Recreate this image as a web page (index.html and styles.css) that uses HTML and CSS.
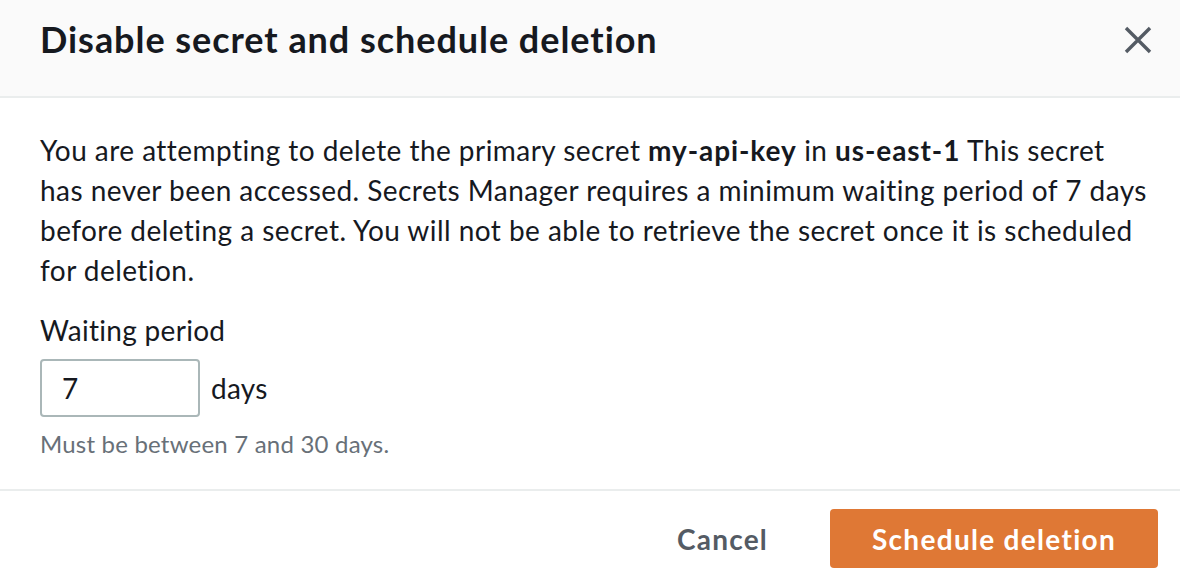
FILE: index.html
```html
<!DOCTYPE html>
<html lang="en">
<head>
<meta charset="utf-8">
<title>Disable secret and schedule deletion</title>
<link rel="stylesheet" href="styles.css">
</head>
<body>
<div class="modal">
  <div class="modal-header">
    <h2 class="modal-title">Disable secret and schedule deletion</h2>
    <button class="close-btn" aria-label="Close">
      <svg width="32" height="32" viewBox="0 0 32 32"><path d="M4 4 L28 28 M28 4 L4 28" stroke="#545b64" stroke-width="3.4" fill="none"/></svg>
    </button>
  </div>
  <div class="modal-body">
    <p class="message">You are attempting to delete the primary secret <b>my-api-key</b> in <b>us-east-1</b> This secret<br>has never been accessed. Secrets Manager requires a minimum waiting period of 7 days<br>before deleting a secret. You will not be able to retrieve the secret once it is scheduled<br>for deletion.</p>
    <div class="field">
      <label class="field-label" for="wp">Waiting period</label>
      <div class="field-row">
        <input id="wp" class="field-input" type="text" value="7">
        <span class="unit">days</span>
      </div>
      <div class="field-help">Must be between 7 and 30 days.</div>
    </div>
  </div>
  <div class="modal-footer">
    <button class="btn btn-link">Cancel</button>
    <button class="btn btn-primary">Schedule deletion</button>
  </div>
</div>
</body>
</html>
```

FILE: styles.css
```css
html, body {
  margin: 0;
  padding: 0;
  background: #ffffff;
}
body {
  font-family: "Lato", "Noto Sans", sans-serif;
  color: #16191f;
  width: 1180px;
  height: 584px;
  overflow: hidden;
}
.modal {
  display: flex;
  flex-direction: column;
}
.modal-header {
  height: 80px;
  padding: 16px 26px 0 40px;
  background: #fafafa;
  border-bottom: 2px solid #eaeded;
  display: flex;
  justify-content: space-between;
  align-items: flex-start;
}
.modal-title {
  margin: 0;
  font-size: 36px;
  line-height: 46px;
  font-weight: 700;
  letter-spacing: 0.95px;
}
.close-btn {
  border: 0;
  background: none;
  padding: 0;
  margin-top: 8px;
  width: 32px;
  height: 32px;
  cursor: pointer;
}
.close-btn svg { display: block; }
.modal-body {
  padding: 32px 40px 29px 40px;
}
.message {
  margin: 0;
  font-size: 28px;
  line-height: 40px;
  letter-spacing: 0.45px;
  white-space: nowrap;
}
.message b {
  font-weight: 700;
  letter-spacing: 0.9px;
}
.field { margin-top: 20px; }
.field-label {
  display: block;
  font-size: 28px;
  line-height: 40px;
  letter-spacing: 0.3px;
}
.field-row {
  margin-top: 9px;
  display: flex;
  align-items: center;
  gap: 11px;
}
.field-input {
  width: 160px;
  height: 58px;
  box-sizing: border-box;
  border: 2px solid #aab7b8;
  border-radius: 4px;
  padding: 0 20px;
  font-family: inherit;
  font-size: 28px;
  color: #16191f;
  background: #fff;
}
.unit {
  font-size: 28px;
  line-height: 40px;
  letter-spacing: 0.3px;
}
.field-help {
  margin-top: 11px;
  font-size: 24px;
  line-height: 32px;
  letter-spacing: 0.2px;
  color: #687078;
}
.modal-footer {
  border-top: 2px solid #eaeded;
  padding: 18px 22px 0 0;
  display: flex;
  justify-content: flex-end;
  align-items: center;
  gap: 22px;
}
.btn {
  font-family: inherit;
  font-size: 28px;
  font-weight: 700;
  height: 59px;
  border-radius: 4px;
  cursor: pointer;
}
.btn-link {
  background: none;
  border: 0;
  color: #545b64;
  padding: 0 40px;
  letter-spacing: 1.2px;
}
.btn-primary {
  background: #df7835;
  border: 0;
  color: #ffffff;
  width: 328px;
  padding: 0;
  letter-spacing: 1.3px;
}
```
